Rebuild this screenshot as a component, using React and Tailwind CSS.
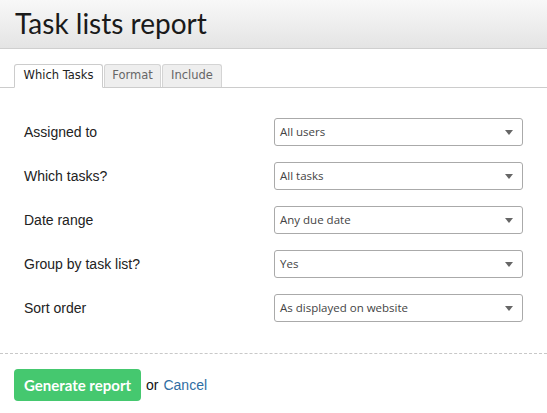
import React from "react";

const rows = [
  ["Assigned to", "All users"],
  ["Which tasks?", "All tasks"],
  ["Date range", "Any due date"],
  ["Group by task list?", "Yes"],
  ["Sort order", "As displayed on website"],
];

export default function App() {
  return (
    <div className="w-[547px] h-[413px] bg-white overflow-hidden relative">
      <div className="h-[49px] bg-gradient-to-b from-[#f8f8f8] to-[#e4e4e4] border-b border-[#cfcfcf] pl-[15px] flex items-center">
        <h1 className="text-[28px] leading-none text-[#1a1a1a] font-['Lato',sans-serif] font-normal -mt-[2px]">
          Task lists report
        </h1>
      </div>
      <div className="pt-[15px] pl-[14px] border-b border-[#cccccc] flex items-end font-['DejaVu_Sans',sans-serif] text-[11.5px]">
        <div className="h-[24px] w-[89px] bg-white border border-[#cccccc] border-b-white -mb-px rounded-t-[3px] flex items-center justify-center text-[#222]">
          Which Tasks
        </div>
        <div className="h-[23px] w-[57px] ml-px bg-[#eeeeee] border border-[#d4d4d4] border-b-0 rounded-t-[3px] flex items-center justify-center text-[#666]">
          Format
        </div>
        <div className="h-[23px] w-[60px] ml-px bg-[#eeeeee] border border-[#d4d4d4] border-b-0 rounded-t-[3px] flex items-center justify-center text-[#666]">
          Include
        </div>
      </div>
      <div className="pt-[30px] flex flex-col gap-[16px]">
        {rows.map(([label, value]) => (
          <div key={label} className="flex items-center h-[28px]">
            <div className="w-[274px] pl-[24px] font-['Liberation_Sans',sans-serif] text-[14px] text-[#222]">
              {label}
            </div>
            <div className="w-[249px] h-[28px] border border-[#aaaaaa] rounded-[3px] flex items-center justify-between pl-[5px] pr-[9px] font-['Open_Sans',sans-serif] text-[11.5px] text-[#444]">
              <span>{value}</span>
              <svg width="8" height="5" viewBox="0 0 8 5">
                <path d="M0 0 H8 L4 5 Z" fill="#666" />
              </svg>
            </div>
          </div>
        ))}
      </div>
      <div className="mt-[31px] border-t border-dashed border-[#c8c8c8]" />
      <div className="pt-[15px] pl-[14px] flex items-center">
        <button className="h-[32px] w-[127px] rounded-[4px] bg-[#45c86f] text-white font-['Lato',sans-serif] font-bold text-[15px] flex items-center justify-center">
          Generate report
        </button>
        <span className="ml-[5px] font-['Liberation_Sans',sans-serif] text-[14px] text-[#111]">or</span>
        <a className="ml-[5px] font-['Liberation_Sans',sans-serif] text-[14px] text-[#2f6ea3]">Cancel</a>
      </div>
    </div>
  );
}
